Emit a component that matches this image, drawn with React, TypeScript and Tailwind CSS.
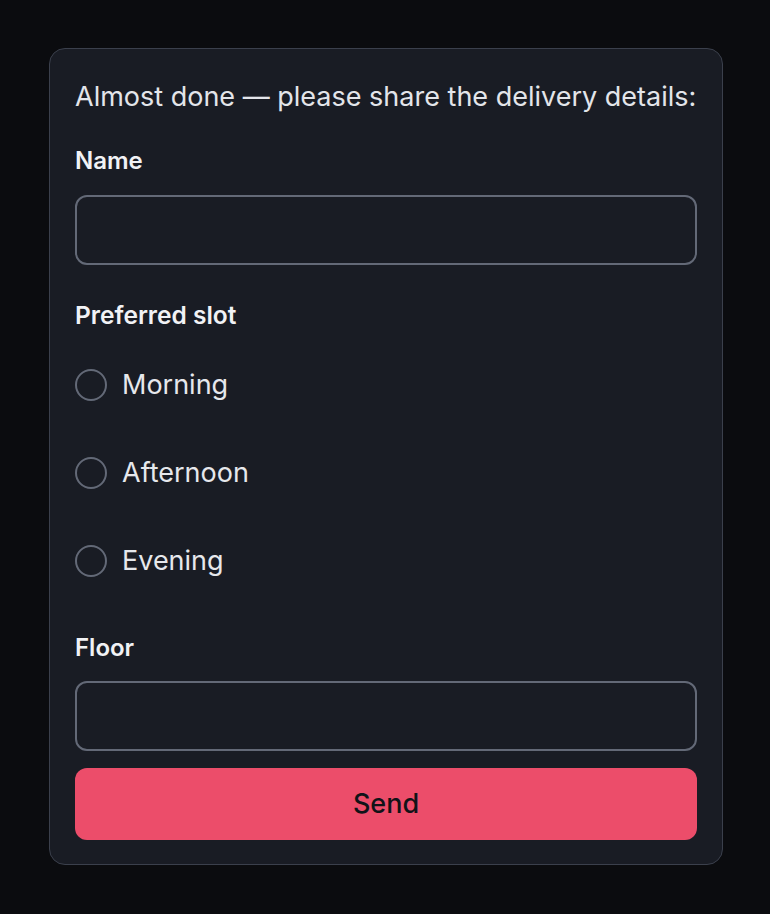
export default function App() {
  const slots = ["Morning", "Afternoon", "Evening"];

  return (
    <div className="min-h-screen w-full bg-[#0b0c0f] pt-[48px] pl-[49px] font-['Inter',sans-serif]">
      <div className="w-[674px] rounded-[16px] border border-[#3b404c] bg-[#191c24] px-[25px] pt-[30px] pb-[24px]">
        <p className="text-[27px] leading-[36px] text-[#e3e5ea] whitespace-nowrap">
          Almost done — please share the delivery details:
        </p>

        <label className="mt-[31px] block text-[24px] leading-[30px] font-semibold text-[#f1f2f5]">
          Name
        </label>
        <input
          type="text"
          className="mt-[19px] block h-[70px] w-full rounded-[12px] border-[2px] border-[#636977] bg-transparent px-4 text-[24px] text-white outline-none"
        />

        <div className="mt-[35px] text-[24.5px] leading-[30px] font-semibold text-[#f1f2f5]">
          Preferred slot
        </div>
        <div className="mt-[11px] flex flex-col">
          {slots.map((s) => (
            <label key={s} className="flex h-[88px] items-center gap-[15px]">
              <span className="h-[32px] w-[32px] rounded-full border-[2px] border-[#636977]" />
              <span className="text-[27px] text-[#e6e8ec]">{s}</span>
            </label>
          ))}
        </div>

        <label className="mt-[28px] block text-[24px] leading-[30px] font-semibold text-[#f1f2f5]">
          Floor
        </label>
        <input
          type="text"
          className="mt-[18px] block h-[70px] w-full rounded-[12px] border-[2px] border-[#636977] bg-transparent px-4 text-[24px] text-white outline-none"
        />

        <button className="mt-[17px] flex h-[72px] w-full items-center justify-center rounded-[12px] bg-[#ec4d6a] text-[27px] font-medium text-[#111318]">
          Send
        </button>
      </div>
    </div>
  );
}
